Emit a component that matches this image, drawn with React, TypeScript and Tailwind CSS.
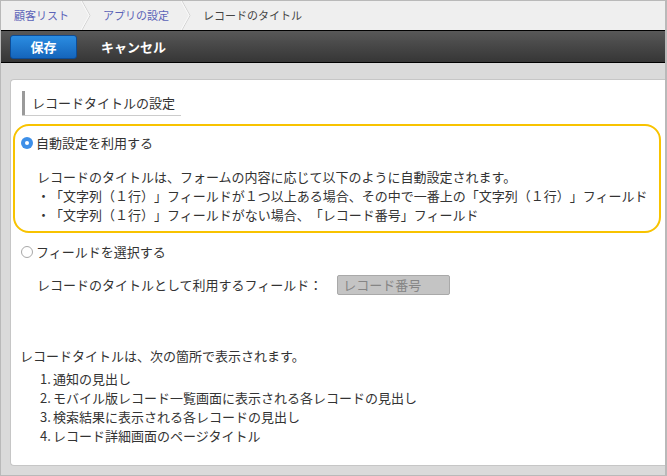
import React from 'react';

const font = { fontFamily: '"Noto Sans CJK JP", "Noto Sans", sans-serif' };

const Chevron = () => (
  <svg width="10" height="29" viewBox="0 0 10 29" className="shrink-0">
    <polyline points="1,0 9,14.5 1,29" fill="none" stroke="#d2d2d2" strokeWidth="1" />
    <polyline points="0,0 8,14.5 0,29" fill="none" stroke="#fafafa" strokeWidth="1" />
  </svg>
);

const Radio = ({ checked }: { checked?: boolean }) =>
  checked ? (
    <span className="flex h-[12px] w-[12px] shrink-0 items-center justify-center rounded-full bg-[#3d8fe8]">
      <span className="h-[4px] w-[4px] rounded-full bg-white" />
    </span>
  ) : (
    <span className="h-[12px] w-[12px] shrink-0 rounded-full border border-[#a8a8a8] bg-white" />
  );

const uses = [
  '通知の見出し',
  'モバイル版レコード一覧画面に表示される各レコードの見出し',
  '検索結果に表示される各レコードの見出し',
  'レコード詳細画面のページタイトル',
];

export default function App() {
  return (
    <div
      className="flex h-[476px] w-[667px] flex-col overflow-hidden border border-r-2 border-[#b9b9b9] bg-[#dadada] text-[13px] text-[#333] [text-spacing-trim:space-all]"
      style={font}
    >
      {/* breadcrumb */}
      <div className="flex h-[29px] shrink-0 items-center bg-[#efefef] pl-[13px] text-[11px]">
        <span className="text-[#5b63b8]">顧客リスト</span>
        <span className="px-[12px]"><Chevron /></span>
        <span className="text-[#5b63b8]">アプリの設定</span>
        <span className="px-[12px]"><Chevron /></span>
        <span className="text-[#444]">レコードのタイトル</span>
      </div>

      {/* toolbar */}
      <div className="flex h-[33px] shrink-0 items-center border-y border-black bg-gradient-to-b from-[#585858] to-[#363636] pl-[9px]">
        <button className="flex h-[24px] w-[67px] items-center justify-center rounded-[3px] border border-[#0d4c96] bg-gradient-to-b from-[#2b8de2] to-[#1565bb] text-[13px] font-bold text-white">
          保存
        </button>
        <span className="ml-[24px] text-[13px] font-bold text-white">キャンセル</span>
      </div>

      {/* panel */}
      <div className="ml-[9px] mt-[16px] h-[387px] shrink-0 rounded-l-[4px] border border-r-0 border-[#c6c6c6] bg-white">
        <div className="ml-[11px] mt-[11px] w-[159px] border-b border-[#cccccc]">
          <div className="flex h-[24px] items-center border-l-[3px] border-[#9a9a9a] pl-[7px]">
            レコードタイトルの設定
          </div>
        </div>

        <div className="ml-[2px] mr-[4px] mt-[8px] rounded-[16px] border-2 border-[#f8c300] pb-[7px] pt-[7px]">
          <label className="flex h-[20px] items-center gap-[3px] pl-[6px]">
            <Radio checked />
            <span>自動設定を利用する</span>
          </label>
          <div className="mt-[14px] pl-[22px] leading-[19px]">
            <div>レコードのタイトルは、フォームの内容に応じて以下のように自動設定されます。</div>
            <div>・「文字列（１行）」フィールドが１つ以上ある場合、その中で一番上の「文字列（１行）」フィールド</div>
            <div>・「文字列（１行）」フィールドがない場合、「レコード番号」フィールド</div>
          </div>
        </div>

        <label className="ml-[10px] mt-[9px] flex h-[20px] items-center gap-[3px]">
          <Radio />
          <span>フィールドを選択する</span>
        </label>

        <div className="mt-[13px] flex h-[20px] items-center pl-[26px]">
          <span>レコードのタイトルとして利用するフィールド：</span>
          <div className="ml-[15px] flex h-[20px] w-[113px] items-center rounded-[2px] border border-[#a9a9a9] bg-[#c4c4c4] pl-[5px] text-[#858585]">
            レコード番号
          </div>
        </div>

        <div className="mt-[51px] pl-[9px] leading-[19px]">
          <div>レコードタイトルは、次の箇所で表示されます。</div>
          <div className="mt-[4px] pl-[20px]">
            {uses.map((u, i) => (
              <div key={u} className="flex">
                <span className="w-[13px] shrink-0">{i + 1}.</span>
                <span>{u}</span>
              </div>
            ))}
          </div>
        </div>
      </div>
    </div>
  );
}
